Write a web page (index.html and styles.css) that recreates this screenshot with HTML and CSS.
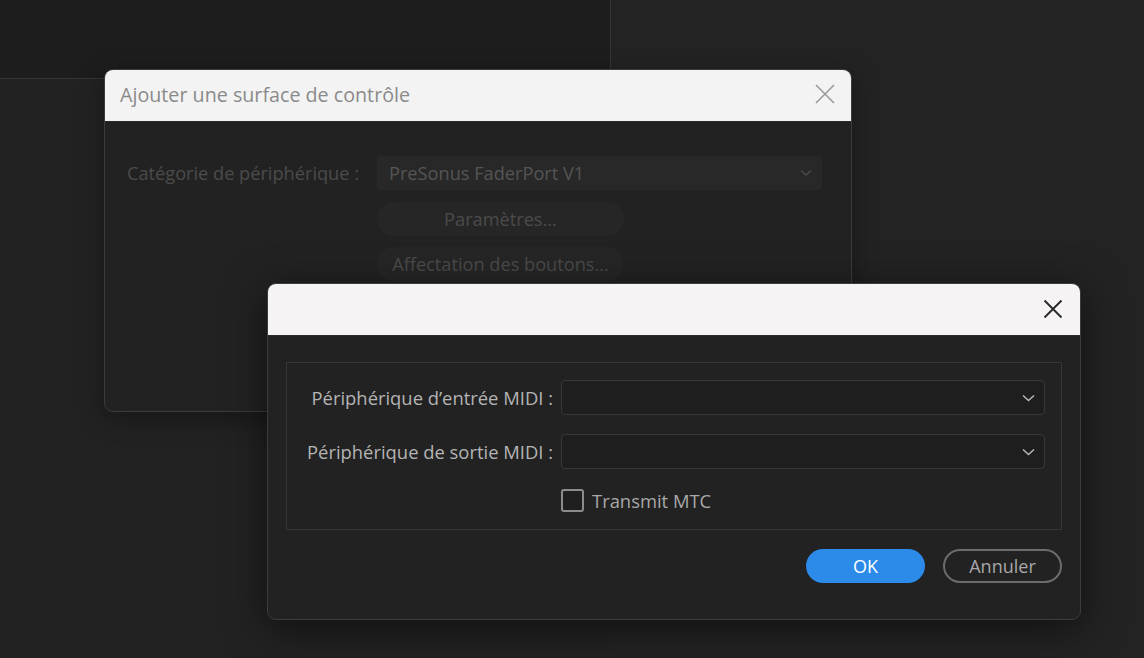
FILE: index.html
```html
<!DOCTYPE html>
<html>
<head>
	<meta charset="utf-8">
	<meta name="viewport" content="width=device-width, initial-scale=1">
	<title>Ajouter une surface de contrôle</title>
	<link rel="stylesheet" href="styles.css">
</head>
<body>

    <div class="workspace">
        <div class="panel-top"></div>
        <div class="panel-side"></div>
        <div class="panel-main"></div>
    </div>

    <div class="dialog dialog-back">
        <div class="titlebar">
            <span class="title">Ajouter une surface de contrôle</span>
            <svg class="close close-dim" width="20" height="20" viewBox="0 0 20 20">
                <path d="M1 1 L19 19 M19 1 L1 19" />
            </svg>
        </div>
        <div class="dialog-body back-body">
            <div class="row">
                <span class="dim-label">Catégorie de périphérique :</span>
                <div class="dim-select">
                    <span>PreSonus FaderPort V1</span>
                    <svg width="12" height="8" viewBox="0 0 12 8"><path d="M1 1.5 L6 6 L11 1.5" /></svg>
                </div>
            </div>
            <div class="dim-button">Paramètres...</div>
            <div class="dim-button">Affectation des boutons...</div>
        </div>
    </div>

    <div class="dialog dialog-front">
        <div class="titlebar">
            <span class="title"></span>
            <svg class="close" width="20" height="20" viewBox="0 0 20 20">
                <path d="M1.5 1.5 L18.5 18.5 M18.5 1.5 L1.5 18.5" />
            </svg>
        </div>
        <div class="dialog-body front-body">
            <div class="group">
                <label class="field-label">Périphérique d’entrée MIDI :</label>
                <div class="select">
                    <svg width="13" height="8" viewBox="0 0 13 8"><path d="M1 1.5 L6.5 6.5 L12 1.5" /></svg>
                </div>

                <label class="field-label">Périphérique de sortie MIDI :</label>
                <div class="select">
                    <svg width="13" height="8" viewBox="0 0 13 8"><path d="M1 1.5 L6.5 6.5 L12 1.5" /></svg>
                </div>

                <span></span>
                <div class="check">
                    <span class="box"></span>
                    <span>Transmit MTC</span>
                </div>
            </div>

            <div class="actions">
                <button class="btn btn-primary">OK</button>
                <button class="btn btn-secondary">Annuler</button>
            </div>
        </div>
    </div>

</body>
</html>
```

FILE: styles.css
```css
* {
    box-sizing: border-box;
}

html, body {
    margin: 0;
    height: 100%;
}

body {
    font-family: "Open Sans", "Noto Sans", sans-serif;
    background-color: #222222;
    position: relative;
    overflow: hidden;
}

.workspace {
    display: grid;
    grid-template-columns: 611px 1fr;
    grid-template-rows: 79px 1fr;
    height: 100%;
}

.panel-top {
    background-color: #1d1d1d;
    border-right: 1px solid #343434;
    border-bottom: 1px solid #343434;
}

.panel-side {
    grid-row: 1 / 3;
    grid-column: 2;
    background-color: #232323;
}

.panel-main {
    background-color: #222222;
}

.dialog {
    position: absolute;
    background-color: #222222;
    border: 1px solid #3c3c3c;
    border-radius: 9px;
    display: flex;
    flex-direction: column;
    overflow: hidden;
}

.dialog-back {
    left: 104px;
    top: 69px;
    width: 748px;
    height: 343px;
    box-shadow: 0 6px 24px rgba(0, 0, 0, 0.35);
}

.dialog-front {
    left: 267px;
    top: 283px;
    width: 814px;
    height: 337px;
    box-shadow: 0 8px 40px rgba(0, 0, 0, 0.55);
}

.titlebar {
    height: 52px;
    flex-shrink: 0;
    background-color: #f3f3f3;
    border-bottom: 1px solid #2a2a2a;
    display: flex;
    align-items: center;
    justify-content: space-between;
    padding: 0 16px 3px 15px;
}

.dialog-front .titlebar {
    background-color: #f5f3f3;
    padding: 0 17px 1px 15px;
}

.title {
    font-size: 19.7px;
    color: #8a8a8a;
}

.close path {
    fill: none;
    stroke: #2a2a2a;
    stroke-width: 1.9;
}

.close-dim path {
    stroke: #9a9a9a;
    stroke-width: 1.6;
}

/* arrière-plan : dialogue désactivé */

.back-body {
    padding: 34px 29px 0 22px;
    display: flex;
    flex-direction: column;
    align-items: flex-start;
    gap: 11px;
}

.row {
    display: flex;
    align-items: center;
    width: 100%;
}

.dim-label {
    width: 250px;
    font-size: 18.2px;
    color: #4b4b4b;
}

.dim-select {
    flex: 1;
    height: 34px;
    background-color: #282828;
    border-radius: 4px;
    display: flex;
    align-items: center;
    justify-content: space-between;
    padding: 0 10px 0 12px;
    font-size: 18.2px;
    color: #555555;
}

.dim-select path {
    fill: none;
    stroke: #4a4a4a;
    stroke-width: 1.5;
}

.dim-button {
    margin-left: 250px;
    width: 247px;
    height: 34px;
    border-radius: 17px;
    background-color: #262626;
    color: #4b4b4b;
    font-size: 18.2px;
    display: flex;
    align-items: center;
    justify-content: center;
}

.back-body .row + .dim-button {
    margin-top: 1px;
}

/* dialogue au premier plan */

.front-body {
    padding: 26px 18px 0 18px;
}

.group {
    border: 1px solid #363636;
    display: grid;
    grid-template-columns: 266px 1fr;
    column-gap: 8px;
    row-gap: 19px;
    align-items: center;
    padding: 17px 16px 17px 0;
    height: 168px;
}

.field-label {
    text-align: right;
    font-size: 18.4px;
    color: #b4b4b4;
}

.select {
    height: 35px;
    background-color: #1e1e1e;
    border: 1px solid #383838;
    border-radius: 4px;
    display: flex;
    align-items: center;
    justify-content: flex-end;
    padding-right: 9px;
}

.select path {
    fill: none;
    stroke: #b4b4b4;
    stroke-width: 1.6;
}

.check {
    display: flex;
    align-items: center;
    gap: 8px;
    font-size: 18.4px;
    color: #a8a8a8;
}

.box {
    width: 23px;
    height: 23px;
    border: 2px solid #8c8c8c;
    border-radius: 3px;
    background-color: #1f1f1f;
}

.actions {
    display: flex;
    justify-content: flex-end;
    gap: 18px;
    margin-top: 19px;
}

.btn {
    width: 119px;
    height: 34px;
    border-radius: 17px;
    font-family: inherit;
    font-size: 18px;
    cursor: pointer;
}

.btn-primary {
    background-color: #2c8be9;
    border: none;
    color: #ffffff;
}

.btn-secondary {
    background-color: transparent;
    border: 2px solid #6c6c6c;
    color: #a8a8a8;
}
```
